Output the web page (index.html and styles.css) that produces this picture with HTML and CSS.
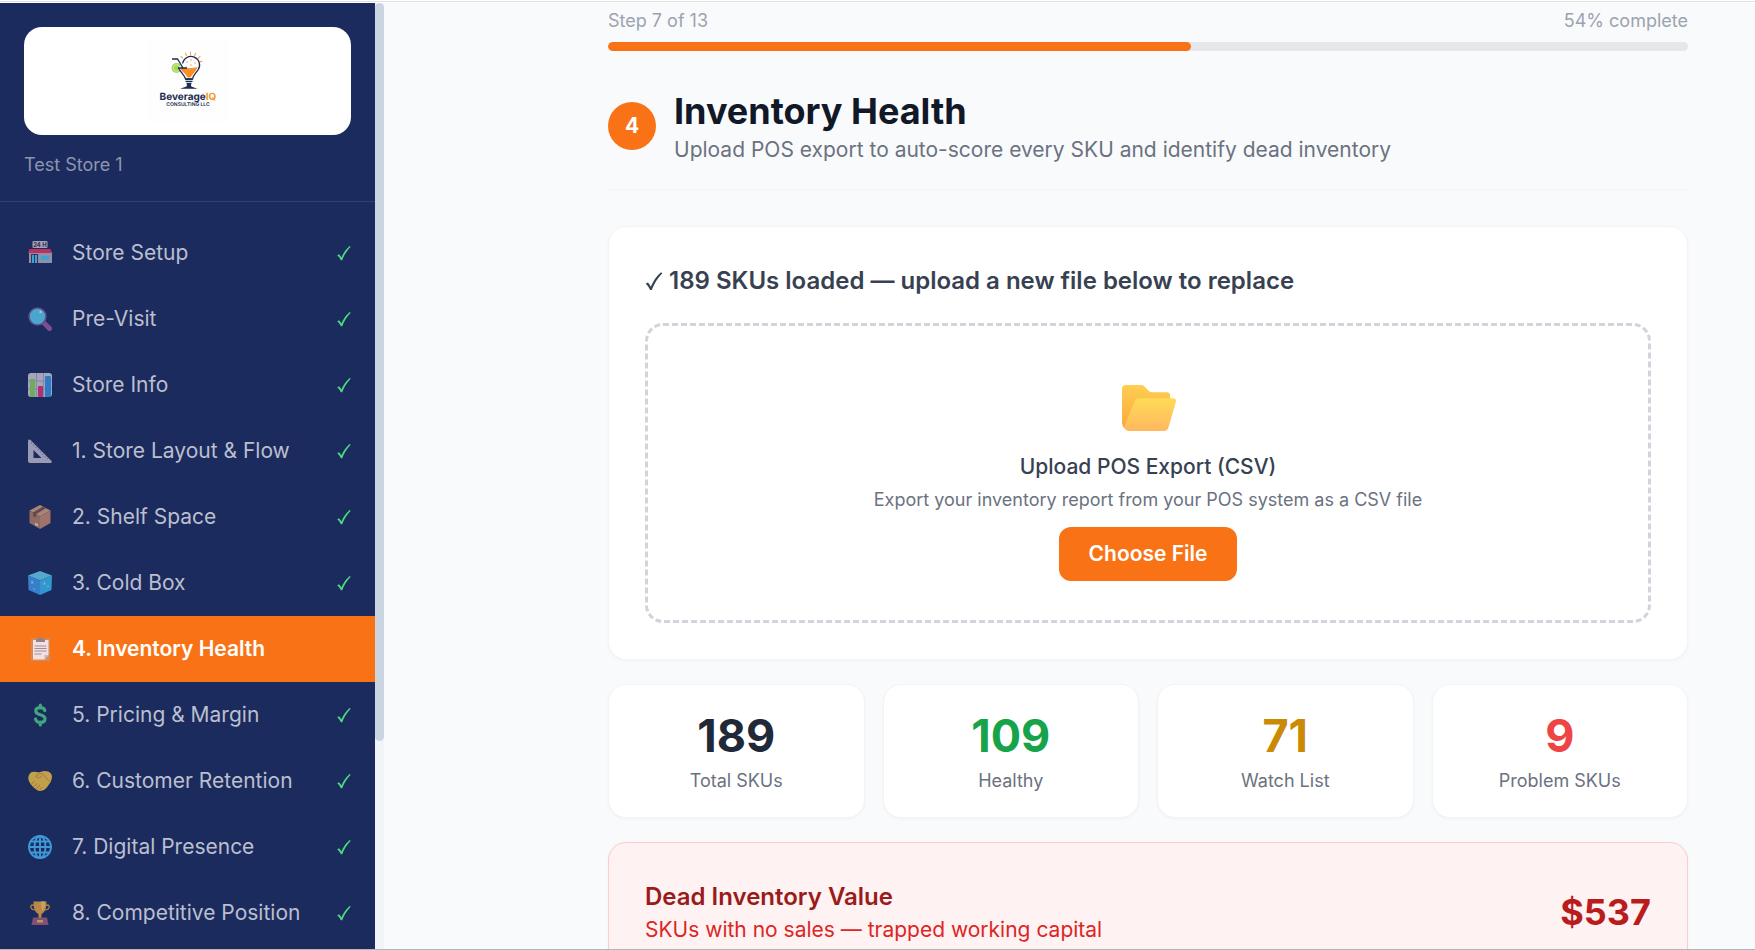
FILE: index.html
```html
<!DOCTYPE html>
<html lang="en">
<head>
    <meta charset="UTF-8">
    <meta name="viewport" content="width=device-width, initial-scale=1.0">
    <title>BeverageIQ - Inventory Health</title>
    <link rel="stylesheet" href="styles.css">
</head>
<body>

    <!-- Shared check mark -->
    <svg class="symbols" aria-hidden="true">
        <symbol id="check" viewBox="0 0 14 16">
            <path d="M.3 10.200L2 9.200c1 .9 1.700 1.900 2.400 3.300C6.300 8 9 4 12.700.900l1 .8C10 5.500 7 10 5.200 15.200H3.900C3 13.200 1.800 11.500.3 10.200z"/>
        </symbol>
    </svg>

    <div class="app">

        <!-- Sidebar -->
        <aside class="sidebar">
            <div class="sidebar-content">
                <div class="brand">
                    <div class="brand-logo">
                        <svg width="82" height="84" viewBox="0 0 82 84" role="img" aria-label="BeverageIQ Consulting LLC">
                            <rect width="82" height="84" fill="#fefefe"/>
                            <path d="M43.500 13v2.800M38.500 14.200l1 2.300M48.700 14.200l-1 2.300M53 17.500l-1.700 1.600M55 22.300l-2 .6M34 17.500l1.400 1.400" stroke="#f9a34b" stroke-width="1.100" stroke-linecap="round"/>
                            <circle cx="29.500" cy="29" r="5" fill="#a5d65b"/>
                            <circle cx="29.500" cy="29" r="3.300" fill="none" stroke="#d6efb0" stroke-width=".8"/>
                            <path d="M35.500 24.500a8.600 8.600 0 1 1 15.500 6.500c-2 3-5 5-5.500 9h-7c-.5-3.500-4.500-6-7-11" fill="#fff" stroke="#1d2d50" stroke-width="1.300"/>
                            <path d="M33 29.300c6-.8 10 .8 17.500-1.300-1 4-5 7-7 10.500h-3c-1.500-3.500-5-5-7.500-9.200z" fill="#fb8f26"/>
                            <path d="M25 20h5.500l5.500 9M31 29h9" fill="none" stroke="#1d2d50" stroke-width="1.300"/>
                            <g fill="#f9a34b"><circle cx="40" cy="23" r=".8"/><circle cx="44" cy="21" r=".8"/><circle cx="48" cy="24" r=".8"/><circle cx="44" cy="26" r=".8"/><circle cx="39" cy="27" r=".6"/></g>
                            <path d="M38.500 40.300h7M38.500 42.400h7M39.500 44.500h5" stroke="#1d2d50" stroke-width="1.400"/>
                            <path d="M40.500 44h3l.8 3.500 6.200 2.300h-17.500l6.500-2.300z" fill="#1d2d50"/>
                            <text class="logo-name" x="41" y="61" text-anchor="middle">Beverage<tspan class="logo-iq">IQ</tspan></text>
                            <text class="logo-tag" x="41" y="67" text-anchor="middle">CONSULTING LLC</text>
                        </svg>
                    </div>
                    <div class="store-name">Test Store 1</div>
                </div>

                <nav class="steps">
                    <a class="step" href="#">
                        <svg class="step-icon" viewBox="0 0 24 24">
                            <rect x="4.500" y="0" width="15" height="7" rx="1" fill="#cfcbd6"/>
                            <text class="sign" x="12" y="5.800" text-anchor="middle">24 H</text>
                            <rect x="1" y="11" width="23" height="11" fill="#b5b2c4"/>
                            <path d="M1.500 8h21l1.500 4H0z" fill="#f0325f"/>
                            <rect x="3" y="13" width="7" height="9" fill="#3b3a66"/>
                            <path d="M4 14h2v8H4zM7 14h2v8H7zM13 15h8v4h-8z" fill="#47cdf5"/>
                        </svg>
                        <span class="step-label">Store Setup</span>
                        <svg class="check"><use href="#check"/></svg>
                    </a>
                    <a class="step" href="#">
                        <svg class="step-icon" viewBox="0 0 24 24">
                            <path d="M15.500 15.500l6 6" stroke="#9c5aa5" stroke-width="5" stroke-linecap="round"/>
                            <circle cx="9.500" cy="9.500" r="8.500" fill="#5bd0f5" stroke="#74599b" stroke-width="1.500"/>
                            <circle cx="12.500" cy="5" r="1.200" fill="#dff7ff"/>
                        </svg>
                        <span class="step-label">Pre-Visit</span>
                        <svg class="check"><use href="#check"/></svg>
                    </a>
                    <a class="step" href="#">
                        <svg class="step-icon" viewBox="0 0 24 24">
                            <rect width="24" height="24" rx="3" fill="#d3d0dc"/>
                            <path d="M8.500 0v24M15.500 0v24M0 8h24M0 16h24" stroke="#aaa7b8" stroke-width="1"/>
                            <rect x="2" y="6" width="5" height="18" rx="1" fill="#8bd65a"/>
                            <rect x="10" y="13" width="5" height="11" rx="1" fill="#e0347a"/>
                            <rect x="17" y="3" width="6" height="21" rx="1" fill="#3398ea"/>
                        </svg>
                        <span class="step-label">Store Info</span>
                        <svg class="check"><use href="#check"/></svg>
                    </a>
                    <a class="step" href="#">
                        <svg class="step-icon" viewBox="0 0 24 24">
                            <path fill-rule="evenodd" d="M0 2c0-1.500 1.500-2 2.500-1l21 21c.8.8.3 2-1 2H2c-1.200 0-2-.8-2-2zM5.500 11v8h8z" fill="#c3bfd2"/>
                            <path d="M3 3.500l18 18" stroke="#8c79bb" stroke-width="1.200" stroke-dasharray="1.200 2"/>
                        </svg>
                        <span class="step-label">1. Store Layout &amp; Flow</span>
                        <svg class="check"><use href="#check"/></svg>
                    </a>
                    <a class="step" href="#">
                        <svg class="step-icon" viewBox="0 0 24 24">
                            <path d="M12 0l10.500 5.500L12 11.500 1.500 5.500z" fill="#d8a583"/>
                            <path d="M1.500 5.500L12 11.500V24L1.500 18z" fill="#b97f61"/>
                            <path d="M22.500 5.500L12 11.500V24l10.500-6z" fill="#ca8e6c"/>
                            <path d="M15 1.600l3 1.600L8 9.200v3.500l-3-1.700V7.500z" fill="#7c5549"/>
                            <path d="M7 17.500l3 1.600v2.500l-3-1.600z" fill="#e3dce6"/>
                        </svg>
                        <span class="step-label">2. Shelf Space</span>
                        <svg class="check"><use href="#check"/></svg>
                    </a>
                    <a class="step" href="#">
                        <svg class="step-icon" viewBox="0 0 24 24">
                            <path d="M12 0l12 4.500-12 5-12-5z" fill="#68d3f2"/>
                            <path d="M0 4.500l12 5V24L.500 19z" fill="#3f9bf0"/>
                            <path d="M24 4.500l-12 5V24l11.500-5z" fill="#38bdf4"/>
                            <path d="M4 9l1.500 3.500H3zM16.500 10l1 3.500h-2.300z" fill="#a8e3fb"/>
                            <circle cx="6" cy="18" r=".8" fill="#a8e3fb"/><circle cx="20" cy="15.500" r=".8" fill="#a8e3fb"/>
                        </svg>
                        <span class="step-label">3. Cold Box</span>
                        <svg class="check"><use href="#check"/></svg>
                    </a>
                    <a class="step active" href="#" aria-current="step">
                        <svg class="step-icon" viewBox="0 0 24 24">
                            <rect x="3" y="1" width="19" height="23" rx="1" fill="#d18d63"/>
                            <path d="M5 3h15.500v15l-4 4.500H5z" fill="#f3eef8"/>
                            <path d="M20.500 18h-4v4.500z" fill="#c9b9cf"/>
                            <path d="M8 5V3c0-1 1-1.500 2-1.500C10.500 0 14 0 14.500 1.500c1.500 0 2.500.5 2.500 1.500v2z" fill="#8e8296"/>
                            <path d="M6.500 9h12M6.500 11.500h12M6.500 14h12M6.500 17h7" stroke="#9a8fa8" stroke-width="1"/>
                        </svg>
                        <span class="step-label">4. Inventory Health</span>
                    </a>
                    <a class="step" href="#">
                        <svg class="step-icon" viewBox="0 0 24 24" fill="none" stroke="#4fcf8b" stroke-width="3.200" stroke-linecap="round">
                            <path d="M12.300 2v3M12.300 19v3M16.800 7.500c-.5-2-2.300-3-4.500-3-2.600 0-4.500 1.300-4.500 3.500 0 5 9.200 2.500 9.200 7.800 0 2.400-2 3.700-4.700 3.700-2.500 0-4.300-1.300-4.800-3.500"/>
                        </svg>
                        <span class="step-label">5. Pricing &amp; Margin</span>
                        <svg class="check"><use href="#check"/></svg>
                    </a>
                    <a class="step" href="#">
                        <svg class="step-icon" viewBox="0 0 24 24">
                            <path d="M1 6c1-3 4-4 7-3 2 .6 3.500.4 5-.2 4-1.500 9-.5 10.500 2.700 1.300 3.500-.5 7.500-3 10.500-1.500 3-5 6-8.500 6C8 22 1.500 15 .600 11 .200 9 .200 8 1 6z" fill="#f9c846"/>
                            <path d="M8 7c2-2.500 5-3 7-1.500l6 6.500M8 7c0 2 3 2.500 5.500.5M3.500 15l2.500-2.500M6 17.500l3-3M8.500 19.500l3-3M11.500 21l2.500-2.500" fill="none" stroke="#cf8c33" stroke-width="1" stroke-linecap="round"/>
                        </svg>
                        <span class="step-label">6. Customer Retention</span>
                        <svg class="check"><use href="#check"/></svg>
                    </a>
                    <a class="step" href="#">
                        <svg class="step-icon" viewBox="0 0 24 24" fill="none" stroke="#4bbcff" stroke-width="1.900">
                            <circle cx="12" cy="12" r="11"/>
                            <ellipse cx="12" cy="12" rx="5.500" ry="11"/>
                            <path d="M12 1v22M1 12h22M3 6.500h18M3 17.500h18"/>
                        </svg>
                        <span class="step-label">7. Digital Presence</span>
                        <svg class="check"><use href="#check"/></svg>
                    </a>
                    <a class="step" href="#">
                        <svg class="step-icon" viewBox="0 0 24 24">
                            <path d="M6.500 4.500C4 3.500 2.500 4 2.800 6c.3 2 2.700 3 5 3M17.500 4.500c2.500-1 4-.5 3.700 1.500-.3 2-2.700 3-5 3" fill="none" stroke="#e79a3c" stroke-width="1.400"/>
                            <path d="M5.500.500h13c0 6-1 10.500-5 12.500v4h-3v-4c-4-2-5-6.500-5-12.500z" fill="#f0a843"/>
                            <path d="M13 .500h4c0 5-1 8-3 10z" fill="#f5cf6a"/>
                            <path d="M5 16.500h14l1.500 7.500h-17z" fill="#a35d7b"/>
                            <rect x="9" y="19" width="6" height="2.500" fill="#f0b95a"/>
                        </svg>
                        <span class="step-label">8. Competitive Position</span>
                        <svg class="check"><use href="#check"/></svg>
                    </a>
                </nav>
            </div>
            <div class="scroll-track"><div class="scroll-thumb"></div></div>
        </aside>

        <!-- Main Content -->
        <main class="main">
            <div class="content">

                <div class="progress">
                    <div class="progress-text">
                        <span>Step 7 of 13</span>
                        <span>54% complete</span>
                    </div>
                    <div class="progress-bar"><div class="progress-fill" style="width: 54%"></div></div>
                </div>

                <header class="page-header">
                    <div class="step-number">4</div>
                    <div>
                        <h1>Inventory Health</h1>
                        <p>Upload POS export to auto-score every SKU and identify dead inventory</p>
                    </div>
                </header>

                <!-- Upload Card -->
                <section class="card upload-card">
                    <h2><svg class="title-check"><use href="#check"/></svg> 189 SKUs loaded — upload a new file below to replace</h2>
                    <div class="drop-zone">
                        <svg class="folder" width="56" height="60" viewBox="-2 0 56 60">
                            <defs>
                                <linearGradient id="folderBack" x1="0" y1="0" x2="0" y2="1">
                                    <stop offset="0" stop-color="#ffce52"/>
                                    <stop offset="1" stop-color="#fca63c"/>
                                </linearGradient>
                                <linearGradient id="folderFront" x1="0" y1="0" x2="0" y2="1">
                                    <stop offset="0" stop-color="#ffdb55"/>
                                    <stop offset="1" stop-color="#ffb860"/>
                                </linearGradient>
                            </defs>
                            <path d="M0 15c0-2.500 1.500-4 4-4h15c1.500 0 2.500.5 3.500 1.500l5 5c.5.500 1.200.8 2 .8H45c2 0 3 1 3 3V40L6 56c-4-1-6-4-6-8z" fill="url(#folderBack)"/>
                            <path d="M12.500 27.500c.8-2 2-3.200 4.500-3.200h34c2.500 0 3.500 1.500 2.800 4l-7.300 25c-.7 2.500-2 3.700-4.500 3.700H7.500C4 57 2 54.500 2.500 52z" fill="url(#folderFront)"/>
                        </svg>
                        <div class="drop-title">Upload POS Export (CSV)</div>
                        <div class="drop-text">Export your inventory report from your POS system as a CSV file</div>
                        <button class="choose-btn" type="button">Choose File</button>
                    </div>
                </section>

                <!-- SKU Stats -->
                <section class="stats">
                    <div class="card stat">
                        <div class="stat-value">189</div>
                        <div class="stat-label">Total SKUs</div>
                    </div>
                    <div class="card stat">
                        <div class="stat-value healthy">109</div>
                        <div class="stat-label">Healthy</div>
                    </div>
                    <div class="card stat">
                        <div class="stat-value watch">71</div>
                        <div class="stat-label">Watch List</div>
                    </div>
                    <div class="card stat">
                        <div class="stat-value problem">9</div>
                        <div class="stat-label">Problem SKUs</div>
                    </div>
                </section>

                <!-- Dead Inventory -->
                <section class="card dead-card">
                    <div>
                        <h2>Dead Inventory Value</h2>
                        <p>SKUs with no sales — trapped working capital</p>
                    </div>
                    <div class="dead-value">$537</div>
                </section>

            </div>
        </main>
    </div>

</body>
</html>
```

FILE: styles.css
```css
/* General Styling */
* {
    box-sizing: border-box;
    margin: 0;
    padding: 0;
}

body {
    font-family: Inter, "Liberation Sans", sans-serif;
    font-size: 21px;
    line-height: 30px;
    color: #111827;
    background-color: #fff;
    height: 100vh;
    padding-top: 1px;
    display: flex;
    flex-direction: column;
    overflow: hidden;
}

body::before {
    content: "";
    height: 1px;
    border-top: 1px solid #dfe1e2;
}

.symbols {
    display: none;
}

.app {
    flex: 1;
    min-height: 0;
    display: flex;
    overflow: hidden;
    background-color: #f9fafc;
    border-bottom: 1px solid #b6b3bd;
}

/* Sidebar */
.sidebar {
    width: 384px;
    flex-shrink: 0;
    display: flex;
}

.sidebar-content {
    flex: 1;
    overflow: hidden;
    background-color: #1c2b5e;
}

.scroll-track {
    width: 9px;
    background-color: #f1f5f9;
}

.scroll-thumb {
    height: 78%;
    border-radius: 5px;
    background-color: #cbd5e1;
}

.brand {
    padding: 24px;
    border-bottom: 1px solid #334170;
}

.brand-logo {
    display: flex;
    justify-content: center;
    padding: 12px;
    border-radius: 18px;
    background-color: #fff;
}

.brand-logo text {
    text-rendering: geometricPrecision;
}

.logo-name {
    font-size: 10px;
    font-weight: 700;
    fill: #1d2d50;
}

.logo-iq {
    fill: #f9952f;
}

.logo-tag {
    font-size: 5px;
    font-weight: 600;
    fill: #1d2d50;
}

.sign {
    font-size: 6px;
    font-weight: 700;
    fill: #3b3350;
}

.store-name {
    margin-top: 18px;
    font-size: 18px;
    line-height: 24px;
    color: #8d95ae;
}

.steps {
    padding: 18px 0;
}

.step {
    display: flex;
    align-items: center;
    gap: 20px;
    padding: 18px 24px 18px 28px;
    color: #bbbfce;
    text-decoration: none;
}

.step-icon {
    width: 24px;
    height: 24px;
    flex-shrink: 0;
    opacity: 0.75;
}

.step-label {
    flex: 1;
    white-space: nowrap;
}

.check {
    width: 14px;
    height: 16px;
    fill: #4ade80;
}

.step.active {
    background-color: #f97316;
    color: #fff;
    font-weight: 600;
}

.active .step-icon {
    opacity: 0.9;
}

/* Main Content */
.main {
    flex: 1;
    min-width: 0;
    padding: 6px 0 24px 157px;
}

.content {
    max-width: 1080px;
    margin: 0 auto;
}

.progress-text {
    display: flex;
    justify-content: space-between;
    margin-bottom: 9px;
    font-size: 18px;
    line-height: 24px;
    color: #9ca3af;
}

.progress-bar {
    height: 9px;
    border-radius: 5px;
    background-color: #e5e7eb;
    overflow: hidden;
}

.progress-fill {
    height: 100%;
    border-radius: 5px;
    background-color: #f97316;
}

.page-header {
    display: flex;
    align-items: center;
    gap: 18px;
    margin: 36px 0;
    padding-bottom: 24px;
    border-bottom: 1px solid #f3f4f6;
}

.step-number {
    width: 48px;
    height: 48px;
    border-radius: 50%;
    background-color: #f97316;
    color: #fff;
    font-weight: 700;
    line-height: 48px;
    text-align: center;
}

.page-header h1 {
    font-size: 36px;
    font-weight: 700;
    line-height: 48px;
}

.page-header p {
    color: #6b7280;
}

/* Cards */
.card {
    border: 1px solid #f3f4f6;
    border-radius: 18px;
    background-color: #fff;
    box-shadow: 0 1px 3px rgba(0, 0, 0, 0.04);
}

.card h2 {
    font-size: 24px;
    font-weight: 600;
    line-height: 36px;
}

.upload-card {
    padding: 36px;
}

.upload-card h2 {
    margin-bottom: 24px;
    color: #374151;
}

.title-check {
    width: 18px;
    height: 20px;
    fill: #374151;
    vertical-align: -2px;
}

.drop-zone {
    display: flex;
    flex-direction: column;
    align-items: center;
    padding: 48px 36px 39px;
    border: 3px dashed #d1d5db;
    border-radius: 18px;
    text-align: center;
}

.folder {
    margin-bottom: 18px;
}

.drop-title {
    font-weight: 500;
    color: #374151;
}

.drop-text {
    margin: 6px 0 15px;
    font-size: 18px;
    line-height: 24px;
    color: #6b7280;
}

.choose-btn {
    padding: 12px 30px;
    border: none;
    border-radius: 12px;
    background-color: #f97316;
    color: #fff;
    font-family: inherit;
    font-size: 21px;
    font-weight: 600;
    line-height: 30px;
    cursor: pointer;
}

.choose-btn:hover {
    background-color: #ea580c;
}

/* Stats */
.stats {
    display: grid;
    grid-template-columns: repeat(4, 1fr);
    gap: 18px;
    margin: 24px 0;
}

.stat {
    padding: 24px;
    text-align: center;
}

.stat-value {
    font-size: 45px;
    font-weight: 700;
    line-height: 54px;
    color: #1f2937;
}

.healthy {
    color: #16a34a;
}

.watch {
    color: #ca8a04;
}

.problem {
    color: #ef4444;
}

.stat-label {
    margin-top: 6px;
    font-size: 18px;
    line-height: 24px;
    color: #6b7280;
}

/* Dead Inventory */
.dead-card {
    display: flex;
    align-items: center;
    justify-content: space-between;
    padding: 36px;
    border-color: #fecaca;
    background-color: #fef2f2;
}

.dead-card h2 {
    color: #991b1b;
}

.dead-card p {
    color: #dc2626;
}

.dead-value {
    font-size: 36px;
    font-weight: 700;
    color: #b91c1c;
}
```
